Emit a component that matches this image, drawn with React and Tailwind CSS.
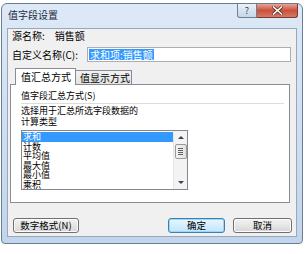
import React from "react";

const items = ["求和", "计数", "平均值", "最大值", "最小值", "乘积"];

function WinButton({ children, primary, className = "" }) {
    return (
        <div
            className={`h-[15px] flex items-center justify-center rounded-[3px] border text-[9.5px] leading-none whitespace-nowrap ${
                primary
                    ? "border-[#3c7fb1] bg-gradient-to-b from-[#eaf6fd] to-[#bee6fd] shadow-[inset_0_0_0_1px_#9fd5f6]"
                    : "border-[#707070] bg-gradient-to-b from-[#f2f2f2] via-[#e6e6e6] to-[#d6d6d6] shadow-[inset_0_0_0_1px_#fcfcfc]"
            } ${className}`}
        >
            {children}
        </div>
    );
}

export default function App() {
    return (
        <div className="w-[308px] h-[254px] bg-white pl-[1px] pt-[3px] text-black font-['Noto_Sans_CJK_SC','Liberation_Sans',sans-serif]">
            {/* Window frame */}
            <div className="w-[302px] h-[241px] rounded-t-[6px] rounded-b-[4px] border border-[#6b7d94] bg-gradient-to-b from-[#dde9f6] via-[#cfdff1] to-[#c2d5ec] px-[5px] pb-[6px] flex flex-col">
                {/* Title bar */}
                <div className="h-[24px] flex items-start justify-between">
                    <span className="pt-[5px] pl-[1px] text-[10px] leading-[12px] text-[#1b2a44]">值字段设置</span>
                    <div className="flex -mr-[1px]">
                        <div className="w-[20px] h-[14px] rounded-bl-[3px] border border-t-0 border-[#6d7f97] bg-gradient-to-b from-[#e9f0f8] to-[#c7d6e8] flex items-center justify-center text-[9px] leading-none text-[#2c3e57]">
                            ?
                        </div>
                        <div className="w-[41px] h-[14px] rounded-br-[3px] border border-t-0 border-l-0 border-[#7a3a30] bg-gradient-to-b from-[#e6a395] via-[#c9503c] to-[#d67866] flex items-center justify-center">
                            <svg width="11" height="9" viewBox="0 0 11 9">
                                <path d="M1.5 1 L9.5 8 M9.5 1 L1.5 8" stroke="#5a2a22" strokeWidth="3" strokeLinecap="square" />
                                <path d="M1.5 1 L9.5 8 M9.5 1 L1.5 8" stroke="#ffffff" strokeWidth="1.6" strokeLinecap="square" />
                            </svg>
                        </div>
                    </div>
                </div>

                {/* Client area */}
                <div className="flex-1 border border-[#97a8bd] bg-[#f0f0f0] flex flex-col text-[10px]">
                    <div className="h-[14px] pl-[4px] flex items-center leading-none">
                        <span>源名称:</span>
                        <span className="ml-[10px]">销售额</span>
                    </div>
                    <div className="mt-[4px] h-[15px] pl-[4px] flex items-center">
                        <span className="w-[75px] leading-none whitespace-nowrap">自定义名称(C):</span>
                        <div className="w-[204px] h-[15px] border border-[#abadb3] bg-white flex items-center pl-[1px]">
                            <span className="bg-[#3399ff] text-white leading-[11px] px-[1px] whitespace-nowrap">求和项:销售额</span>
                        </div>
                    </div>

                    {/* Tabs */}
                    <div className="mt-[6px] h-[16px] flex items-end pl-[7px] relative z-10">
                        <div className="h-[17px] w-[61px] -mb-[1px] border border-b-0 border-[#898c95] bg-white flex items-center pl-[5px] leading-none whitespace-nowrap">
                            值汇总方式
                        </div>
                        <div className="h-[14px] w-[56px] border border-l-0 border-b-0 border-[#898c95] bg-gradient-to-b from-[#f2f2f2] to-[#e3e3e3] flex items-center pl-[4px] leading-none whitespace-nowrap">
                            值显示方式
                        </div>
                    </div>

                    {/* Tab panel */}
                    <div className="ml-[2px] w-[280px] h-[119px] border border-[#898c95] bg-white flex flex-col pl-[10px] pr-[5px] text-[9px]">
                        <div className="mt-[5px] h-[10px] flex items-center leading-none">值字段汇总方式(S)</div>
                        <div className="mt-[3px] h-px bg-[#dcdcdc]" />
                        <div className="mt-[1px] leading-[11px]">
                            <div>选择用于汇总所选字段数据的</div>
                            <div>计算类型</div>
                        </div>
                        <div className="mt-[3px] w-[167px] h-[60px] border border-[#828790] bg-white flex">
                            <div className="flex-1 pt-px">
                                {items.map((it, i) => (
                                    <div
                                        key={it}
                                        className={`h-[9.6px] pl-[1px] text-[9px] leading-[9.6px] ${
                                            i === 0 ? "bg-[#3399ff] text-white" : ""
                                        }`}
                                    >
                                        {it}
                                    </div>
                                ))}
                            </div>
                            <div className="w-[14px] bg-[#f3f3f3] border-l border-[#e6e6e6] flex flex-col items-center">
                                <div className="h-[13px] flex items-center justify-center">
                                    <div className="w-0 h-0 border-l-[3px] border-r-[3px] border-b-[3px] border-l-transparent border-r-transparent border-b-[#404040]" />
                                </div>
                                <div className="w-[12px] h-[15px] rounded-[2px] border border-[#9a9a9a] bg-gradient-to-r from-[#f4f4f4] to-[#e1e1e1] flex flex-col items-center justify-center gap-[1px]">
                                    <div className="w-[5px] h-px bg-[#606060]" />
                                    <div className="w-[5px] h-px bg-[#606060]" />
                                    <div className="w-[5px] h-px bg-[#606060]" />
                                    <div className="w-[5px] h-px bg-[#606060]" />
                                </div>
                                <div className="flex-1" />
                                <div className="h-[13px] flex items-center justify-center">
                                    <div className="w-0 h-0 border-l-[3px] border-r-[3px] border-t-[3px] border-l-transparent border-r-transparent border-t-[#404040]" />
                                </div>
                            </div>
                        </div>
                    </div>

                    {/* Buttons */}
                    <div className="mt-[15px] flex items-center pl-[5px] pr-[4px]">
                        <WinButton className="w-[66px]">数字格式(N)</WinButton>
                        <div className="flex-1" />
                        <WinButton primary className="w-[57px]">确定</WinButton>
                        <WinButton className="w-[59px] ml-[8px]">取消</WinButton>
                    </div>
                </div>
            </div>
        </div>
    );
}
